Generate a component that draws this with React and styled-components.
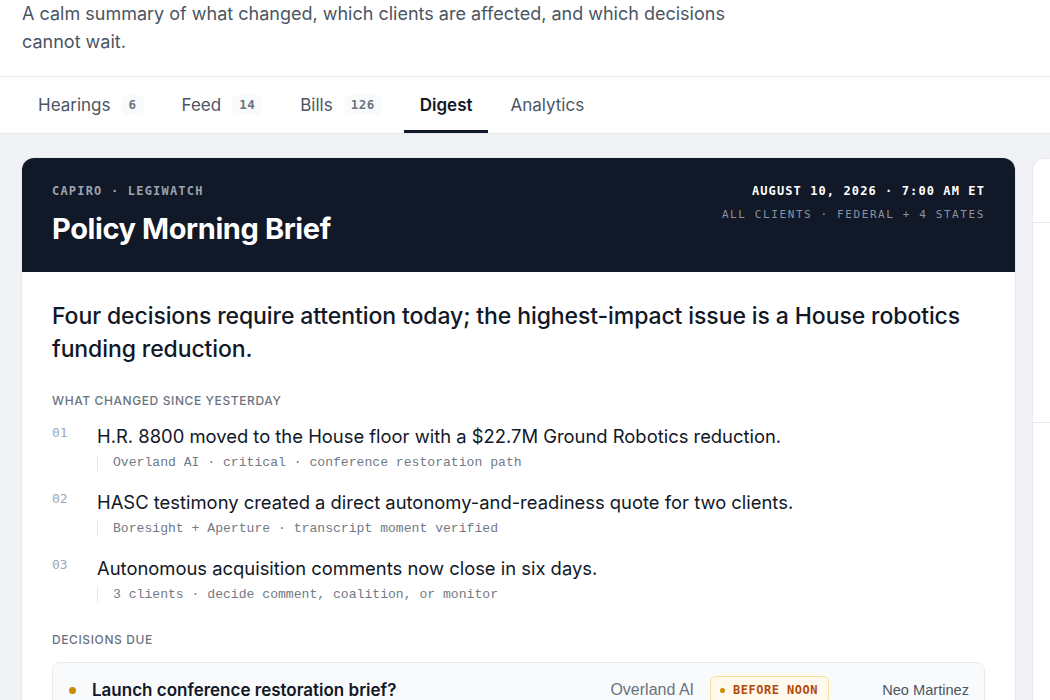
import React from "react";
import styled, { createGlobalStyle } from "styled-components";

const GlobalStyle = createGlobalStyle`
  html, body { margin: 0; padding: 0; }
  body {
    font-family: Inter, "Noto Sans", sans-serif;
    background: #f1f2f5;
    color: #111827;
    overflow: hidden;
    -webkit-font-smoothing: antialiased;
  }
  * { box-sizing: border-box; }
`;

const MONO = `"DejaVu Sans Mono", "Liberation Mono", monospace`;

const Page = styled.div`
  width: 1050px;
  min-height: 700px;
  display: flex;
  flex-direction: column;
`;

const Intro = styled.header`
  background: #ffffff;
  padding: 0 22px 20px;
  border-bottom: 1px solid #e5e7eb;
`;

const Lede = styled.p`
  margin: 0;
  max-width: 720px;
  font-size: 18px;
  line-height: 28px;
  color: #4b5563;
`;

const TabBar = styled.nav`
  background: #ffffff;
  border-bottom: 1px solid #e5e7eb;
  padding: 0 22px;
  display: flex;
  gap: 6px;
`;

const Tab = styled.button`
  border: 0;
  background: none;
  font-family: inherit;
  font-size: 17px;
  line-height: 24px;
  padding: 16px 16px;
  display: flex;
  align-items: center;
  gap: 11px;
  color: ${(p) => (p.$active ? "#111827" : "#4b5563")};
  font-weight: ${(p) => (p.$active ? 600 : 400)};
  box-shadow: ${(p) => (p.$active ? "inset 0 -3px 0 #111827" : "none")};
  cursor: pointer;
`;

const Count = styled.span`
  font-family: ${MONO};
  font-size: 12.5px;
  font-weight: 700;
  letter-spacing: 0.5px;
  line-height: 20px;
  padding: 0 7px;
  border-radius: 6px;
  background: #f9fafb;
  color: #6b7280;
`;

const Workspace = styled.main`
  display: grid;
  grid-template-columns: 993px 320px;
  gap: 17px;
  padding: 24px 22px 0;
  align-items: start;
`;

const BriefCard = styled.article`
  background: #ffffff;
  border-radius: 12px;
  box-shadow: 0 1px 2px rgba(17, 24, 39, 0.06), 0 0 0 1px rgba(17, 24, 39, 0.03);
`;

const Masthead = styled.div`
  background: #111827;
  color: #ffffff;
  border-radius: 12px 12px 0 0;
  padding: 25px 30px 25px;
  display: flex;
  justify-content: space-between;
  align-items: flex-start;
`;

const Kicker = styled.div`
  font-family: ${MONO};
  font-size: 12px;
  font-weight: 600;
  letter-spacing: 1.2px;
  line-height: 16px;
  color: #9ca3af;
`;

const BriefTitle = styled.h1`
  margin: 12px 0 0;
  font-size: 29px;
  line-height: 36px;
  font-weight: 700;
  letter-spacing: -0.4px;
  color: #ffffff;
`;

const Stamp = styled.div`
  text-align: right;
  font-family: ${MONO};
`;

const StampDate = styled.div`
  font-size: 12px;
  font-weight: 700;
  letter-spacing: 1.1px;
  line-height: 16px;
  color: #ffffff;
`;

const StampScope = styled.div`
  margin-top: 8px;
  font-size: 11px;
  letter-spacing: 1.6px;
  line-height: 16px;
  color: #8b93a1;
`;

const BriefBody = styled.div`
  padding: 28px 30px 30px;
`;

const Headline = styled.p`
  margin: 0;
  font-size: 23px;
  line-height: 33px;
  font-weight: 450;
  color: #111827;
  letter-spacing: -0.1px;
`;

const SectionLabel = styled.h2`
  margin: ${(p) => p.$top}px 0 14px;
  font-size: 12px;
  line-height: 16px;
  font-weight: 500;
  letter-spacing: 0.6px;
  text-transform: uppercase;
  color: #6b7280;
`;

const ChangeList = styled.ol`
  list-style: none;
  margin: 0;
  padding: 0;
  display: flex;
  flex-direction: column;
  gap: 18px;
`;

const Change = styled.li`
  display: grid;
  grid-template-columns: 45px 1fr;
`;

const ChangeIndex = styled.span`
  font-family: ${MONO};
  font-size: 13px;
  line-height: 20px;
  color: #a0a7b3;
`;

const ChangeTitle = styled.div`
  font-size: 18.4px;
  line-height: 26px;
  color: #111827;
`;

const ChangeMeta = styled.div`
  margin-top: 6px;
  padding-left: 15px;
  border-left: 1px solid #e5e7eb;
  font-family: "Liberation Mono", monospace;
  font-size: 13.1px;
  line-height: 16px;
  color: #737a86;
`;

const DecisionRow = styled.div`
  display: grid;
  grid-template-columns: 7px 1fr auto auto 124px;
  align-items: center;
  column-gap: 16px;
  padding: 13px 15px 13px 16px;
  background: #f9fafb;
  border: 1px solid #e8eaee;
  border-radius: 8px;
`;

const Dot = styled.span`
  width: 7px;
  height: 7px;
  border-radius: 50%;
  background: ${(p) => p.$color};
`;

const DecisionTitle = styled.div`
  font-size: 17px;
  font-weight: 600;
  line-height: 22px;
  color: #111827;
`;

const DecisionClient = styled.div`
  font-family: "Liberation Sans", Arial, sans-serif;
  font-size: 16px;
  color: #6b7280;
`;

const Deadline = styled.span`
  display: inline-flex;
  align-items: center;
  gap: 8px;
  height: 28px;
  padding: 0 10px 0 9px;
  border: 1px solid #fcdf9c;
  background: #fffaeb;
  border-radius: 6px;
  font-family: ${MONO};
  font-size: 12px;
  font-weight: 700;
  letter-spacing: 0.5px;
  color: #b4490c;
`;

const SmallDot = styled.span`
  width: 5px;
  height: 5px;
  border-radius: 50%;
  background: #ca8a04;
`;

const DecisionOwner = styled.div`
  font-family: "Liberation Sans", Arial, sans-serif;
  font-size: 14.6px;
  color: #4b5563;
  text-align: right;
`;

const SidePanel = styled.aside`
  background: #ffffff;
  border: 1px solid #e8eaee;
  border-radius: 12px;
  min-height: 560px;
`;

const SideHeader = styled.div`
  height: 64px;
  border-bottom: 1px solid #e5e7eb;
`;

const SideSection = styled.div`
  height: 200px;
  border-bottom: 1px solid #e5e7eb;
`;

const tabs = [
  { label: "Hearings", count: 6 },
  { label: "Feed", count: 14 },
  { label: "Bills", count: 126 },
  { label: "Digest", active: true },
  { label: "Analytics" },
];

const changes = [
  {
    title: "H.R. 8800 moved to the House floor with a $22.7M Ground Robotics reduction.",
    meta: "Overland AI · critical · conference restoration path",
  },
  {
    title: "HASC testimony created a direct autonomy-and-readiness quote for two clients.",
    meta: "Boresight + Aperture · transcript moment verified",
  },
  {
    title: "Autonomous acquisition comments now close in six days.",
    meta: "3 clients · decide comment, coalition, or monitor",
  },
];

export default function App() {
  return (
    <Page>
      <GlobalStyle />
      <Intro>
        <Lede>
          A calm summary of what changed, which clients are affected, and which decisions cannot wait.
        </Lede>
      </Intro>

      <TabBar>
        {tabs.map((t) => (
          <Tab key={t.label} $active={t.active}>
            {t.label}
            {t.count != null && <Count>{t.count}</Count>}
          </Tab>
        ))}
      </TabBar>

      <Workspace>
        <BriefCard>
          <Masthead>
            <div>
              <Kicker>CAPIRO · LEGIWATCH</Kicker>
              <BriefTitle>Policy Morning Brief</BriefTitle>
            </div>
            <Stamp>
              <StampDate>AUGUST 10, 2026 · 7:00 AM ET</StampDate>
              <StampScope>ALL CLIENTS · FEDERAL + 4 STATES</StampScope>
            </Stamp>
          </Masthead>

          <BriefBody>
            <Headline>
              Four decisions require attention today; the highest-impact issue is a House robotics funding reduction.
            </Headline>

            <SectionLabel $top={27}>What changed since yesterday</SectionLabel>
            <ChangeList>
              {changes.map((c, i) => (
                <Change key={c.title}>
                  <ChangeIndex>{String(i + 1).padStart(2, "0")}</ChangeIndex>
                  <div>
                    <ChangeTitle>{c.title}</ChangeTitle>
                    <ChangeMeta>{c.meta}</ChangeMeta>
                  </div>
                </Change>
              ))}
            </ChangeList>

            <SectionLabel $top={29}>Decisions due</SectionLabel>
            <DecisionRow>
              <Dot $color="#ca8a04" />
              <DecisionTitle>Launch conference restoration brief?</DecisionTitle>
              <DecisionClient>Overland AI</DecisionClient>
              <Deadline>
                <SmallDot />
                BEFORE NOON
              </Deadline>
              <DecisionOwner>Neo Martinez</DecisionOwner>
            </DecisionRow>
          </BriefBody>
        </BriefCard>

        <SidePanel>
          <SideHeader />
          <SideSection />
        </SidePanel>
      </Workspace>
    </Page>
  );
}
